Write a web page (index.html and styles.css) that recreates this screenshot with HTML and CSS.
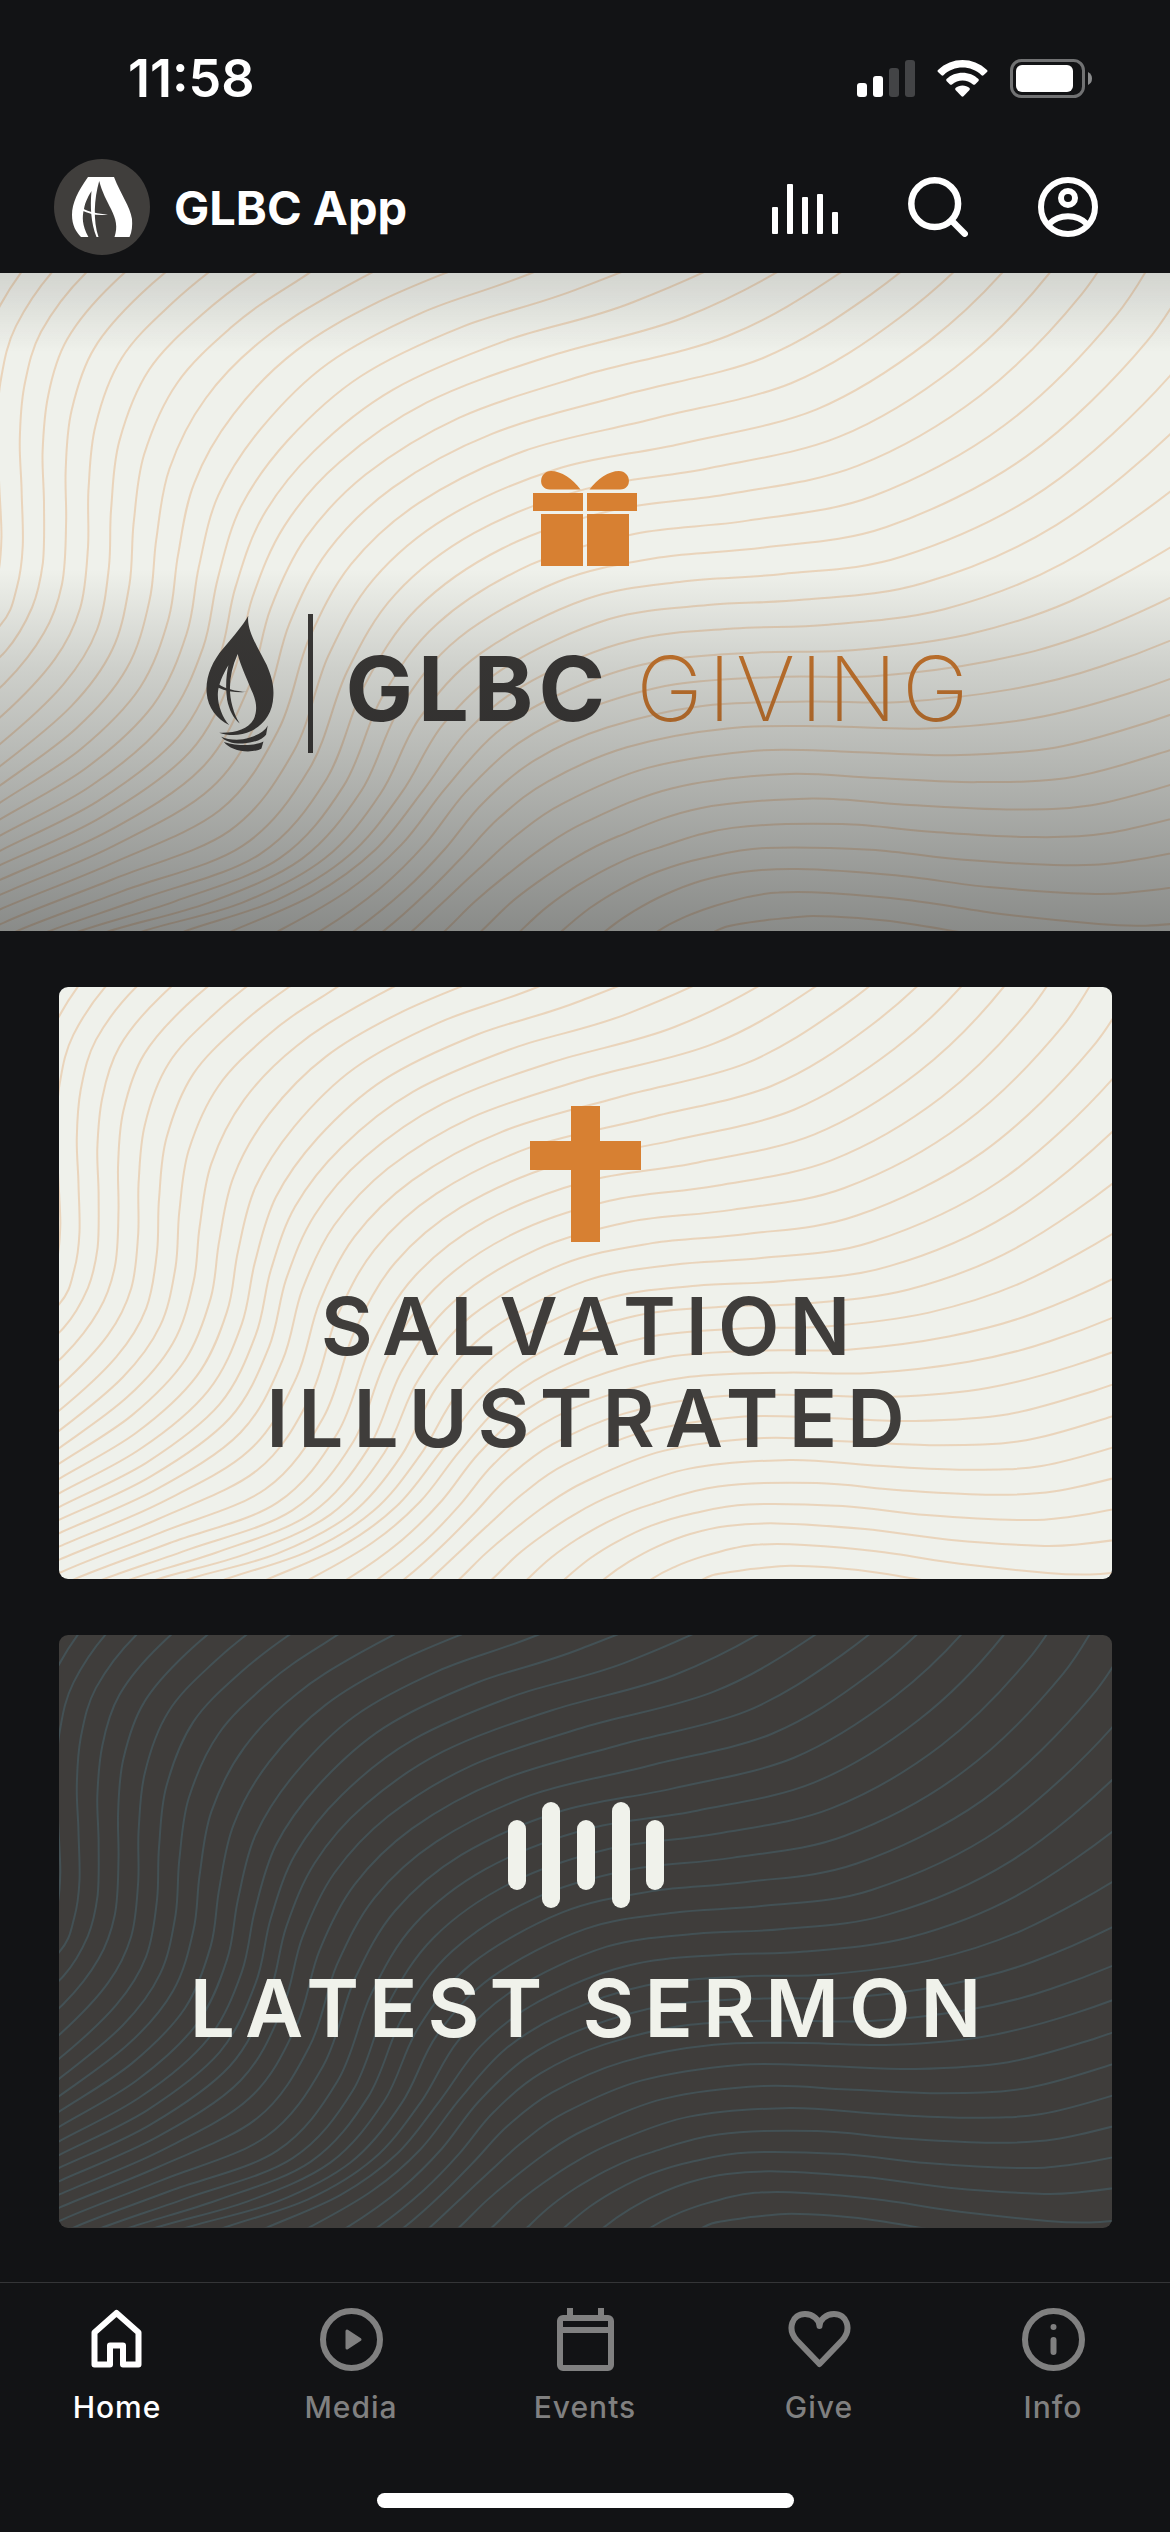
FILE: index.html
```html
<!DOCTYPE html>
<html lang="en">
<head>
  <meta charset="UTF-8">
  <meta name="viewport" content="width=device-width, initial-scale=1">
  <title>GLBC App</title>
  <link rel="stylesheet" href="styles.css">
</head>
<body>
  <!-- Shared wave lines, filled in by waves.js -->
  <svg class="defs" aria-hidden="true">
    <symbol id="waves" viewBox="0 0 3136 1568" preserveAspectRatio="none">
      <path id="waveLines" fill="none" stroke="currentColor" vector-effect="non-scaling-stroke" d="" />
    </symbol>
  </svg>

  <div class="app">
    <!-- Status bar -->
    <div class="status-bar">
      <span class="time">11:58</span>
      <div class="status-icons">
        <svg width="58" height="37" viewBox="0 0 58 37" fill="#fff">
          <rect x="0" y="23" width="10" height="14" rx="3" />
          <rect x="16" y="16" width="10" height="21" rx="3" />
          <rect x="32" y="8" width="10" height="29" rx="3" fill="#434446" />
          <rect x="48" y="0" width="10" height="37" rx="3" fill="#434446" />
        </svg>
        <svg width="51" height="37" viewBox="0 0 51 37" fill="#fff">
          <path d="M1 10C15-3.300 36-3.300 50 10Q51 11 50 12L46.500 15.300Q45.500 16 44.500 15.200C34 5 17 5 6.500 15.200Q5.500 16 4.500 15.300L1 12Q0 11 1 10Z" />
          <path d="M9.500 19C18 10.500 33 10.500 41.500 19Q42.200 20 41.500 21L38 24.500Q37 25.200 36 24.500C30 19 21 19 15 24.500Q14 25.200 13 24.500L9.500 21Q8.800 20 9.500 19Z" />
          <path d="M18.500 28C22 24.500 29 24.500 32.500 28Q33.200 29 32.500 30L26.500 36.300Q25.500 37 24.500 36.300L18.500 30Q17.800 29 18.500 28Z" />
        </svg>
        <svg width="82" height="39" viewBox="0 0 82 39">
          <rect x="1.500" y="1.500" width="72" height="36" rx="10" fill="none" stroke="#717273" stroke-width="3" />
          <rect x="6" y="6" width="57" height="27" rx="6" fill="#fff" />
          <path d="M78 13Q82 15 82 19.500T78 26Z" fill="#8a8b8c" />
        </svg>
      </div>
    </div>

    <!-- Header -->
    <header class="header">
      <svg class="avatar" viewBox="0 0 96 96">
        <circle cx="48" cy="48" r="48" fill="#403e3c" />
        <g fill="#fff">
          <path d="M34 18C24 32 18 44 18 56C18 66 22 73 27 78H34.400C28 66 28 58 30 50C31 43 35 36 37.500 32C36 48 37 64 42.500 78H44.500C39 62 40 40 45.200 22C48 33 53 42 57 50C62 60 64 68 60.500 78H75.500C78 73 78.500 66 78 60C76 47 67 36 60 18Z" />
          <path d="M28 49C35 53 44 55 54 55.500C44 57 35 55 28 51.500Z" />
        </g>
      </svg>
      <h1>GLBC App</h1>
      <nav class="header-actions">
        <button class="icon-button" aria-label="Now playing">
          <svg width="66" height="60" viewBox="0 0 66 60" fill="#fff">
            <rect x="0" y="30" width="6" height="27" rx="1" />
            <rect x="15" y="7" width="6" height="50" rx="1" />
            <rect x="30" y="20" width="6" height="37" rx="1" />
            <rect x="45" y="17" width="6" height="40" rx="1" />
            <rect x="60" y="35" width="6" height="22" rx="1" />
          </svg>
        </button>
        <button class="icon-button" aria-label="Search">
          <svg width="60" height="60" viewBox="0 0 60 60" fill="none" stroke="#fff" stroke-width="6.500" stroke-linecap="round">
            <circle cx="26.700" cy="26.700" r="23.400" />
            <path d="M45 45L56.700 56.700" />
          </svg>
        </button>
        <button class="icon-button" aria-label="Account">
          <svg width="60" height="60" viewBox="0 0 60 60" fill="none" stroke="#fff" stroke-width="6">
            <circle cx="30" cy="30" r="27" />
            <circle cx="30" cy="21" r="7" />
            <path d="M11 47C21 36.500 39 36.500 49 47" />
          </svg>
        </button>
      </nav>
    </header>

    <main>
      <!-- Giving banner -->
      <a class="hero" href="#give">
        <svg class="waves"><use href="#waves" /></svg>
        <svg class="gift" width="104" height="95" viewBox="0 0 104 95" fill="#d78032">
          <path d="M17 18.500C4 18.500 6 0 18 0C28 0 40 8 47.500 18.500Z" />
          <path d="M87 18.500C100 18.500 98 0 86 0C76 0 64 8 56.500 18.500Z" />
          <rect x="0" y="22" width="50" height="18" />
          <rect x="54" y="22" width="50" height="18" />
          <rect x="8" y="43" width="42" height="52" />
          <rect x="54" y="43" width="42" height="52" />
        </svg>
        <div class="brand">
          <svg class="flame" viewBox="78 75 206 412" fill="#3c3a38">
            <path d="M206 76C200 120 240 180 262 225C278 262 284 290 282 320C280 370 255 405 215 425C185 440 145 440 118 430C165 432 205 420 222 390C236 362 230 330 215 300C200 262 182 225 174 192C150 245 144 300 158 350C164 372 170 385 180 402C160 385 148 360 142 330C136 290 140 250 146 226C128 255 116 285 114 310C112 345 128 385 148 407C110 388 84 355 80 310C76 262 96 215 130 175C162 138 190 105 206 76Z" />
            <path d="M116 283C140 298 165 303 202 307C170 309 140 305 114 293Z" />
            <path d="M265 408C255 428 225 443 190 450C165 453 140 450 124 442C135 456 160 464 190 463C225 460 250 450 260 436Z" />
            <path d="M252 457C225 470 180 472 132 458C145 475 175 486 205 487C225 486 240 483 246 478Z" />
          </svg>
          <span class="divider"></span>
          <h2><strong>GLBC</strong> <span>GIVING</span></h2>
        </div>
      </a>

      <div class="cards">
        <a class="card light" href="#salvation">
          <svg class="waves"><use href="#waves" /></svg>
          <svg width="111" height="136" viewBox="0 0 111 136" fill="#d78032">
            <path d="M41 0H70V35H111V64H70V136H41V64H0V35H41Z" />
          </svg>
          <h2>SALVATION<br>ILLUSTRATED</h2>
        </a>
        <a class="card dark" href="#sermon">
          <svg class="waves"><use href="#waves" /></svg>
          <svg width="156" height="106" viewBox="0 0 156 106" fill="#f0f2eb">
            <rect x="0" y="18" width="18" height="70" rx="9" />
            <rect x="34" y="0" width="18" height="106" rx="9" />
            <rect x="69" y="18" width="18" height="70" rx="9" />
            <rect x="104" y="0" width="18" height="106" rx="9" />
            <rect x="138" y="18" width="18" height="70" rx="9" />
          </svg>
          <h2>LATEST SERMON</h2>
        </a>
      </div>
    </main>

    <!-- Bottom tabs -->
    <nav class="tabs">
      <a class="tab active" href="#home">
        <svg viewBox="0 0 63 63"><path d="M8.500 24.500L30.500 5L52.500 24.500V56.500H37V37.500H24V56.500H8.500Z" /></svg>
        Home
      </a>
      <a class="tab" href="#media">
        <svg viewBox="0 0 63 63">
          <circle cx="31.500" cy="31.500" r="28.500" />
          <path class="solid" d="M27 23V40L40 31.500Z" />
        </svg>
        Media
      </a>
      <a class="tab" href="#events">
        <svg viewBox="0 0 63 63">
          <rect x="6" y="10" width="51" height="50" rx="3" />
          <path d="M6 22H57M16 0V10M47 0V10" />
        </svg>
        Events
      </a>
      <a class="tab" href="#give">
        <svg viewBox="0 0 63 63"><path d="M31.500 56L8.500 32C-1 21 4 6 17 6C25 6 31.500 12 31.500 18C31.500 12 38 6 46 6C59 6 64 21 54.500 32Z" /></svg>
        Give
      </a>
      <a class="tab" href="#info">
        <svg class="round" viewBox="0 0 63 63">
          <circle cx="31.500" cy="31.500" r="28.500" />
          <path d="M31.500 19V19.100M31.500 32V44" />
        </svg>
        Info
      </a>
    </nav>
    <div class="home-indicator"></div>
  </div>

  <script src="waves.js"></script>
</body>
</html>
```
FILE: styles.css
```css
* { box-sizing: border-box; }

body {
  margin: 0;
  background: #121315;
  color: #fff;
  font-family: Inter, 'Liberation Sans', sans-serif;
}

a {
  color: inherit;
  text-decoration: none;
}

h1, h2 {
  margin: 0;
}

svg {
  display: block;
  flex-shrink: 0;
}

.defs {
  position: absolute;
  width: 0;
  height: 0;
}

.app {
  display: flex;
  flex-direction: column;
  min-height: 100vh;
}

/* Status bar */
.status-bar {
  display: flex;
  align-items: center;
  justify-content: space-between;
  height: 141px;
  padding: 15px 78px 0 128px;
}

.time {
  font-size: 52px;
  font-weight: 600;
}

.status-icons {
  display: flex;
  align-items: center;
  gap: 22px;
}

/* Header */
.header {
  display: flex;
  align-items: center;
  height: 132px;
  padding: 0 72px 0 54px;
}

.avatar {
  width: 96px;
  height: 96px;
}

.header h1 {
  margin-left: 24px;
  font-size: 47px;
  font-weight: 700;
}

.header-actions {
  display: flex;
  gap: 70px;
  margin-left: auto;
}

.icon-button {
  padding: 0;
  border: none;
  background: none;
  cursor: pointer;
}

/* Wave background */
.waves {
  position: absolute;
  inset: 0;
  width: 100%;
  height: 100%;
  color: rgba(222, 145, 75, 0.3);
  stroke-width: 2px;
}

/* Hero */
.hero {
  position: relative;
  display: flex;
  flex-direction: column;
  align-items: center;
  aspect-ratio: 16 / 9;
  padding-top: 198px;
  overflow: hidden;
  background: #eff1eb;
}

.hero::after {
  content: '';
  position: absolute;
  inset: 0;
  background:
    linear-gradient(to bottom, rgba(18, 19, 21, 0.13), rgba(18, 19, 21, 0) 12%),
    linear-gradient(to bottom, rgba(18, 19, 21, 0) 45%, rgba(18, 19, 21, 0.15) 60%, rgba(18, 19, 21, 0.46));
}

.gift, .brand {
  position: relative;
}

.brand {
  display: flex;
  align-items: center;
  margin-top: 48px;
  padding-left: 10px;
}

.flame {
  width: 68px;
  height: 137px;
}

.divider {
  width: 5px;
  height: 139px;
  margin: 0 32px 0 34px;
  background: #3c3a38;
}

.brand h2 {
  padding-top: 10px;
  color: #3c3a38;
  font-size: 90px;
  font-weight: 700;
  line-height: 104px;
  letter-spacing: 5px;
  white-space: nowrap;
}

.brand strong {
  font-weight: 700;
}

.brand h2 span {
  color: #d07a2e;
  font-weight: 200;
}

/* Cards */
.cards {
  display: flex;
  flex-direction: column;
  gap: 56px;
  padding: 56px 58px 54px 59px;
}

.card {
  position: relative;
  display: flex;
  flex-direction: column;
  align-items: center;
  aspect-ratio: 16 / 9;
  overflow: hidden;
  border-radius: 9px;
  text-align: center;
}

.card > :not(.waves) {
  position: relative;
}

.card h2 {
  padding-left: 10px;
  font-size: 80px;
  font-weight: 600;
  line-height: 92px;
  letter-spacing: 10px;
}

.light {
  gap: 38px;
  padding-top: 119px;
  background: #eff1eb;
  color: #3f3d3b;
}

.dark {
  gap: 54px;
  padding-top: 167px;
  background: #3f3d3b;
  color: #f0f2eb;
}

.dark .waves {
  color: #435155;
}

/* Tabs */
.tabs {
  display: grid;
  grid-template-columns: repeat(5, 1fr);
  margin-top: auto;
  padding: 25px 0 68px;
  border-top: 1px solid #343537;
}

.tab {
  display: flex;
  flex-direction: column;
  align-items: center;
  gap: 18px;
  color: #808080;
  font-size: 30px;
  font-weight: 500;
  line-height: 36px;
  letter-spacing: 1px;
}

.tab svg {
  width: 63px;
  height: 63px;
  fill: none;
  stroke: currentColor;
  stroke-width: 6px;
  stroke-linejoin: round;
}

.tab .round {
  stroke-linecap: round;
}

.tab .solid {
  fill: currentColor;
  stroke-width: 3px;
}

.tab.active {
  color: #fff;
}

.home-indicator {
  width: 417px;
  height: 15px;
  margin: 0 auto 24px;
  border-radius: 8px;
  background: #fff;
}
```
FILE: waves.js
```js
// Key lines of the pattern: [line number, points from lower left to upper right].
// Lines between two keys are blended.
const keyLines = [
  [-2, [[-380, 750], [-200, 720], [-190, 680], [-180, 600], [-185, 520], [-190, 400], [-190, 270], [-150, 100], [-20, -100], [150, -250], [400, -400], [900, -600], [1400, -900], [1800, -1100]]],
  [2, [[-150, 950], [0, 840], [45, 750], [61, 650], [58, 520], [53, 400], [65, 270], [110, 140], [230, 0], [450, -160], [700, -300], [1200, -450], [1700, -800], [2000, -1000]]],
  [6, [[-150, 1215], [0, 1122], [170, 980], [260, 850], [292, 700], [298, 560], [320, 400], [400, 230], [540, 100], [685, 0], [950, -150], [1500, -350], [2000, -650], [2300, -850]]],
  [10, [[-150, 1385], [0, 1302], [230, 1180], [410, 1030], [500, 860], [533, 700], [585, 530], [700, 370], [880, 215], [1130, 95], [1425, 0], [1900, -180], [2300, -450], [2600, -700]]],
  [14, [[-150, 1510], [0, 1446], [290, 1330], [540, 1180], [665, 990], [725, 800], [820, 630], [980, 480], [1230, 345], [1568, 243], [1950, 150], [2251, 0], [2500, -180], [2750, -450]]],
  [18, [[-100, 1640], [45, 1568], [330, 1472], [650, 1365], [830, 1180], [930, 950], [1060, 765], [1270, 620], [1568, 515], [1900, 465], [2250, 390], [2560, 225], [2813, 0], [3000, -260]]],
  [22, [[200, 1635], [384, 1568], [650, 1500], [870, 1395], [1020, 1240], [1125, 1060], [1290, 905], [1568, 778], [1830, 735], [2098, 717], [2420, 675], [2800, 515], [3136, 245], [3300, 20]]],
  [26, [[720, 1635], [858, 1568], [1020, 1465], [1140, 1360], [1250, 1235], [1390, 1120], [1568, 1040], [1810, 980], [2098, 962], [2350, 960], [2650, 925], [2900, 865], [3200, 745], [3400, 630]]],
  [30, [[1090, 1650], [1192, 1568], [1270, 1500], [1350, 1440], [1450, 1372], [1568, 1309], [1800, 1228], [2098, 1194], [2350, 1203], [2620, 1213], [2880, 1200], [3136, 1137], [3300, 1085], [3450, 1030]]],
  [34, [[1520, 1650], [1623, 1568], [1700, 1520], [1780, 1482], [1880, 1448], [1990, 1427], [2138, 1420], [2400, 1435], [2650, 1463], [2918, 1479], [3040, 1475], [3200, 1455], [3300, 1430], [3450, 1390]]],
  [36, [[1780, 1650], [1918, 1568], [1990, 1550], [2060, 1541], [2130, 1535], [2180, 1532], [2300, 1537], [2450, 1552], [2700, 1590], [2950, 1625], [3100, 1640], [3200, 1640], [3300, 1640], [3450, 1640]]]
];

// Cubic Hermite blend across uneven key numbers
function blend(n, axis, point) {
  let k = 0;
  while (k < keyLines.length - 2 && keyLines[k + 1][0] <= n) k++;
  const at = i => keyLines[Math.max(0, Math.min(keyLines.length - 1, i))];
  const val = i => at(i)[1][point][axis];
  const slope = i => {
    const span = at(i + 1)[0] - at(i - 1)[0];
    return (val(i + 1) - val(i - 1)) / span;
  };
  const width = at(k + 1)[0] - at(k)[0];
  const t = (n - at(k)[0]) / width;
  const t2 = t * t;
  const t3 = t2 * t;
  return (2 * t3 - 3 * t2 + 1) * val(k) + (t3 - 2 * t2 + t) * width * slope(k)
    + (3 * t2 - 2 * t3) * val(k + 1) + (t3 - t2) * width * slope(k + 1);
}

// Smooth path through the points
function toPath(pts) {
  let d = `M${pts[0].map(Math.round)}`;
  for (let i = 0; i < pts.length - 1; i++) {
    const p0 = pts[Math.max(0, i - 1)];
    const p1 = pts[i];
    const p2 = pts[i + 1];
    const p3 = pts[Math.min(pts.length - 1, i + 2)];
    const c1 = [0, 1].map(a => Math.round(p1[a] + (p2[a] - p0[a]) / 6));
    const c2 = [0, 1].map(a => Math.round(p2[a] - (p3[a] - p1[a]) / 6));
    d += `C${c1} ${c2} ${p2.map(Math.round)}`;
  }
  return d;
}

let lines = '';
for (let n = 0; n <= 36; n++) {
  const pts = keyLines[0][1].map((_, p) => [blend(n, 0, p), blend(n, 1, p)]);
  lines += toPath(pts);
}
document.getElementById('waveLines').setAttribute('d', lines);
```
